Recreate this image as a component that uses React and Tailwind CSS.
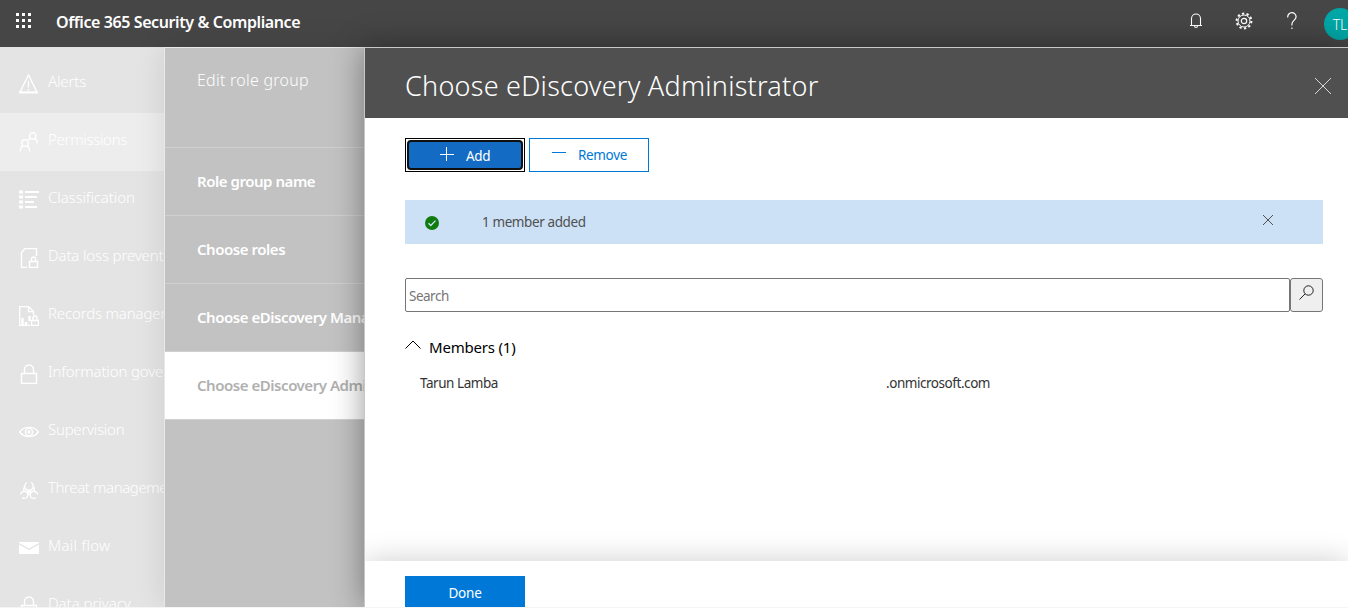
import React from 'react';

function Icon({ children, className = 'size-5' }) {
  return (
    <svg viewBox="0 0 20 20" className={`${className} shrink-0`} fill="none" stroke="currentColor" strokeWidth="1.4">
      {children}
    </svg>
  );
}

const lock = (
  <g>
    <path d="M2.5 9.5h15v10h-15z" />
    <path d="M5.5 9.5V5.5a4.500 4.500 0 0 1 9 0v4" />
  </g>
);

const navItems = [
  {
    label: 'Alerts',
    tracking: 'tracking-[-0.15px]',
    icon: (
      <g>
        <path d="M9.5 1 .8 18.5h17.4z" />
        <path d="M0 18.4h19" strokeWidth="1.8" />
        <path d="M9.5 7v6.5M9.5 15v1.5" />
      </g>
    ),
  },
  {
    label: 'Permissions',
    active: true,
    tracking: 'tracking-[-0.3px]',
    icon: (
      <g>
        <circle cx="13.7" cy="3.9" r="3.2" />
        <path d="M10.5 6.5 9.5 8M16 6.4c1.600 1 2.400 2.500 2.500 5" />
        <circle cx="6" cy="11" r="3.300" />
        <path d="M1.200 19.500c.2-2.700 1-4.500 2.800-5.700M8 13.600c1.800 1 2.600 3 2.700 5.900" />
      </g>
    ),
  },
  {
    label: 'Classification',
    tracking: 'tracking-[-0.1px]',
    icon: (
      <g strokeWidth="2">
        <path d="M6 2h14M6 7h12M6 12h9M6 17h12" />
        <path d="M.8 1.300h2.400v1.400H.8zM.8 6.300h2.400v1.400H.8zM.8 11.300h2.400v1.400H.8zM.8 16.300h2.400v1.400H.8z" strokeWidth="1.600" />
      </g>
    ),
  },
  {
    label: 'Data loss prevention',
    tracking: 'tracking-[-0.15px]',
    icon: (
      <g>
        <path d="M8 19.500H2.500V4.500l3.500-4h11.500V8" />
        <path d="M10.500 13.500h8v6h-8zM12.500 13.500V11a2 2 0 0 1 4 0v2.500" />
      </g>
    ),
  },
  {
    label: 'Records management',
    tracking: 'tracking-[-0.15px]',
    icon: (
      <g>
        <path d="M11 19.500H.6V.6h9l4.900 5V9M9.500.6v5h5" />
        <path d="M3.500 19v-7M7 19v-3M10.500 15v-5" strokeWidth="2.400" />
        <path d="M12.500 14.500h7v5h-7zM14 14.500V12a2 2 0 0 1 4 0v2.500" />
      </g>
    ),
  },
  { label: 'Information governance', tracking: 'tracking-[-0.15px]', icon: lock },
  {
    label: 'Supervision',
    tracking: 'tracking-[-0.25px]',
    icon: (
      <g>
        <path d="M.5 10C5 3.800 15 3.800 19.500 10 15 16 5 16 .5 10z" />
        <circle cx="10" cy="10" r="3.600" />
        <circle cx="10" cy="10" r="1" />
      </g>
    ),
  },
  {
    label: 'Threat management',
    tracking: 'tracking-[-0.4px]',
    icon: (
      <g strokeWidth="1.300">
        <path d="M8 2.500C5.500 4 5.500 6 6 8c1 3 7 3 8 0 .5-2 .5-4-2-5.500" />
        <path d="M1.500 14.500C2 11.500 5 10.500 7.500 12c2.300 2 1.500 5-.5 6-1.500.6-3 .2-3.500-.5" />
        <path d="M18.500 14.500c-.5-3-3.500-4-6-2.500-2.300 2-1.500 5 .5 6 1.500.6 3 .2 3.500-.5" />
        <path d="M5.500 6.500C4.500 8 4.500 9.500 5 11M14.500 6.500c1 1.500 1 3 .5 4.500M10 10v5M7.500 12h5" />
      </g>
    ),
  },
  {
    label: 'Mail flow',
    tracking: 'tracking-[0.3px]',
    icon: (
      <g stroke="none" fill="currentColor">
        <path d="M0 4h20v1L10 10.500 0 5z" />
        <path d="M0 6.500 10 12l10-5.500V16H0z" />
      </g>
    ),
  },
  { label: 'Data privacy', tracking: 'tracking-[-0.05px]', icon: lock },
];

const steps = [
  { label: 'Role group name' },
  { label: 'Choose roles' },
  { label: 'Choose eDiscovery Manager' },
  { label: 'Choose eDiscovery Administrator', active: true },
];

function TopBar() {
  return (
    <header className="flex h-[47px] shrink-0 items-center bg-[#464646] text-white">
      <div className="ml-4 mb-[6px] grid grid-cols-3 gap-[3px]">
        {Array.from({ length: 9 }, (_, i) => (
          <span key={i} className="size-[3px] bg-white" />
        ))}
      </div>
      <h1 className="ml-[25px] mb-1 text-[16px] leading-6 font-semibold tracking-[-0.4px] whitespace-nowrap">
        Office 365 Security &amp; Compliance
      </h1>
      <div className="ml-auto flex h-full shrink-0 items-start">
        <svg className="mt-[13px] mr-[33px] h-4 w-3" viewBox="0 0 12 16" fill="none" stroke="currentColor" strokeWidth="1.100">
          <path d="M1.500 12.500v-7a4.500 4.500 0 0 1 9 0v7M0 12.500h12M4.500 13c0 2 3 2 3 0" />
        </svg>
        <svg className="mt-3 mr-[34px] size-[18px]" viewBox="0 0 18 18" fill="none" stroke="currentColor">
          <circle cx="9" cy="9" r="7.400" strokeWidth="2" strokeDasharray="2.325 2.325" />
          <circle cx="9" cy="9" r="6" />
          <circle cx="9" cy="9" r="2.700" strokeWidth="1.200" />
        </svg>
        <svg className="mt-3 mr-[27px] h-[18px] w-[10px]" viewBox="0 0 10 18" fill="none" stroke="currentColor" strokeWidth="1.200">
          <path d="M.7 5.500V5a4.200 4.200 0 0 1 8.400-.2c0 3.200-4.200 4-4.200 7.200v1.500M4.900 15.500V17" />
        </svg>
        <div className="-mr-2 mt-2 flex size-8 items-center justify-center rounded-full bg-[#00a6a6] text-[14px] font-light">TL</div>
      </div>
    </header>
  );
}

function SideNav() {
  return (
    <nav className="h-full w-[164px] shrink-0 overflow-hidden bg-[#e4e4e4] pt-2 text-white">
      {navItems.map((item) => (
        <div key={item.label} className={`flex h-[58px] pl-[19px] ${item.active ? 'bg-[#ededed]' : ''}`}>
          <div className="mt-[19px]">
            <Icon>{item.icon}</Icon>
          </div>
          <span className={`ml-[9px] text-[15px] leading-[52px] font-[350] whitespace-nowrap ${item.tracking}`}>{item.label}</span>
        </div>
      ))}
    </nav>
  );
}

function StepPanel() {
  return (
    <section className="relative h-full w-[200px] shrink-0 border-t border-l border-[#e9e9e9] bg-[#c2c2c2] text-white shadow-[0_0_30px_rgba(0,0,0,0.100)]">
      <div className="h-[100px] overflow-hidden border-b border-[#d0d0d0] pl-8">
        <h2 className="text-[16px] leading-[64px] font-[350] tracking-[0.250px] whitespace-nowrap">Edit role group</h2>
      </div>
      {steps.map((step) => (
        <div
          key={step.label}
          className={`h-[68px] overflow-hidden border-b border-[#d0d0d0] pl-8 text-[15px] leading-[66px] font-semibold tracking-[-0.460px] whitespace-nowrap ${
            step.active ? 'bg-white text-[#b0b0b0]' : ''
          }`}
        >
          {step.label}
        </div>
      ))}
    </section>
  );
}

function Notice() {
  return (
    <div className="mt-7 flex h-11 items-center bg-[#cde1f6] pl-5 text-[#505050]">
      <svg className="mt-[2px] size-[14px]" viewBox="0 0 14 14">
        <circle cx="7" cy="7" r="7" fill="#107c10" />
        <path d="M3.500 7.300 5.800 9.500 10.500 4.600" stroke="#cde1f6" strokeWidth="1.300" fill="none" />
      </svg>
      <span className="ml-[43px] text-[13.5px] leading-5 tracking-[-0.4px]">1 member added</span>
      <svg className="mr-[49px] mb-1 ml-auto size-[12px]" viewBox="0 0 12 12" stroke="currentColor">
        <path d="M1 1 11 11M11 1 1 11" />
      </svg>
    </div>
  );
}

function AdminPanel() {
  return (
    <section className="relative flex h-full min-w-0 flex-1 flex-col border-t border-l border-[#c8c8c8] bg-white shadow-[0_0_30px_rgba(0,0,0,0.400)]">
      <div className="flex h-[70px] shrink-0 items-start justify-between bg-[#505050] pl-10 text-white">
        <h2 className="text-[27px] leading-[75px] font-[350] tracking-[0.240px] whitespace-nowrap">Choose eDiscovery Administrator</h2>
        <svg className="mt-[30px] mr-[17px] size-4" viewBox="0 0 16 16" stroke="#d8d8d8">
          <path d="M0 0 16 16M16 0 0 16" />
        </svg>
      </div>
      <div className="flex min-h-0 flex-1 flex-col pt-5 pr-[25px] pl-10">
        <div className="flex gap-1 text-[13.5px] tracking-[-0.35px]">
          <button className="h-[34px] w-[120px] border border-black bg-white p-px">
            <span className="flex h-full w-full items-start rounded-[4px] border-2 border-[#101010] bg-[#136bc3] pl-[31px] text-white">
              <svg className="mt-[5px] size-[14px]" viewBox="0 0 14 14" stroke="currentColor">
                <path d="M0 7.500h14M6.500 0v14" />
              </svg>
              <span className="ml-[12px] leading-7">Add</span>
            </span>
          </button>
          <button className="flex h-[34px] w-[120px] items-start border border-[#0078d7] pl-[22px] text-[#0078d7]">
            <svg className="mt-[7px] size-[14px]" viewBox="0 0 14 14" stroke="currentColor">
              <path d="M0 6.500h14" />
            </svg>
            <span className="ml-[12px] leading-[33px]">Remove</span>
          </button>
        </div>
        <Notice />
        <div className="mt-[34px] flex h-[34px] shrink-0">
          <div className="flex-1 rounded-[2px] border border-[#767676] pl-[3px] text-[13.5px] leading-[34px] font-normal tracking-[-0.500px] text-[#757575]">
            Search
          </div>
          <button className="flex w-[33px] justify-center rounded-[3px] border border-[#767676] bg-[#efefef] pt-[6px]">
            <svg className="size-[15px]" viewBox="0 0 15 15" fill="none" stroke="#222">
              <circle cx="9.500" cy="5.500" r="4.700" />
              <path d="M6 9 .5 14.500" />
            </svg>
          </button>
        </div>
        <div className="mt-[23px] flex h-6 items-start text-black">
          <svg className="mt-[5px] h-[9px] w-4" viewBox="0 0 16 9" fill="none" stroke="currentColor">
            <path d="M.5 8.500 8 1l7.500 7.500" />
          </svg>
          <span className="ml-2 text-[15px] leading-6 font-normal tracking-[-0.200px] whitespace-nowrap">Members (1)</span>
        </div>
        <div className="mt-3 flex pl-[15px] text-[13.5px] leading-[25px] tracking-[-0.45px] text-[#333]">
          <span className="w-[466px]">Tarun Lamba</span>
          <span>.onmicrosoft.com</span>
        </div>
      </div>
      <div className="h-[46px] shrink-0 bg-white pt-[15px] pl-10 shadow-[0_0_30px_rgba(0,0,0,0.200)] [clip-path:inset(-40px_0_0_0)]">
        <div className="h-[31px] w-[120px] overflow-hidden bg-[#0078d7] text-center text-[13.5px] leading-[34px] tracking-[-0.2px] text-white">
          Done
        </div>
      </div>
    </section>
  );
}

export default function App() {
  return (
    <div className="flex h-[608px] w-full flex-col overflow-hidden border-b border-[#f5f5f5] bg-white font-['Noto_Sans','Open_Sans',sans-serif]">
      <TopBar />
      <div className="flex min-h-0 flex-1">
        <SideNav />
        <StepPanel />
        <AdminPanel />
      </div>
    </div>
  );
}
